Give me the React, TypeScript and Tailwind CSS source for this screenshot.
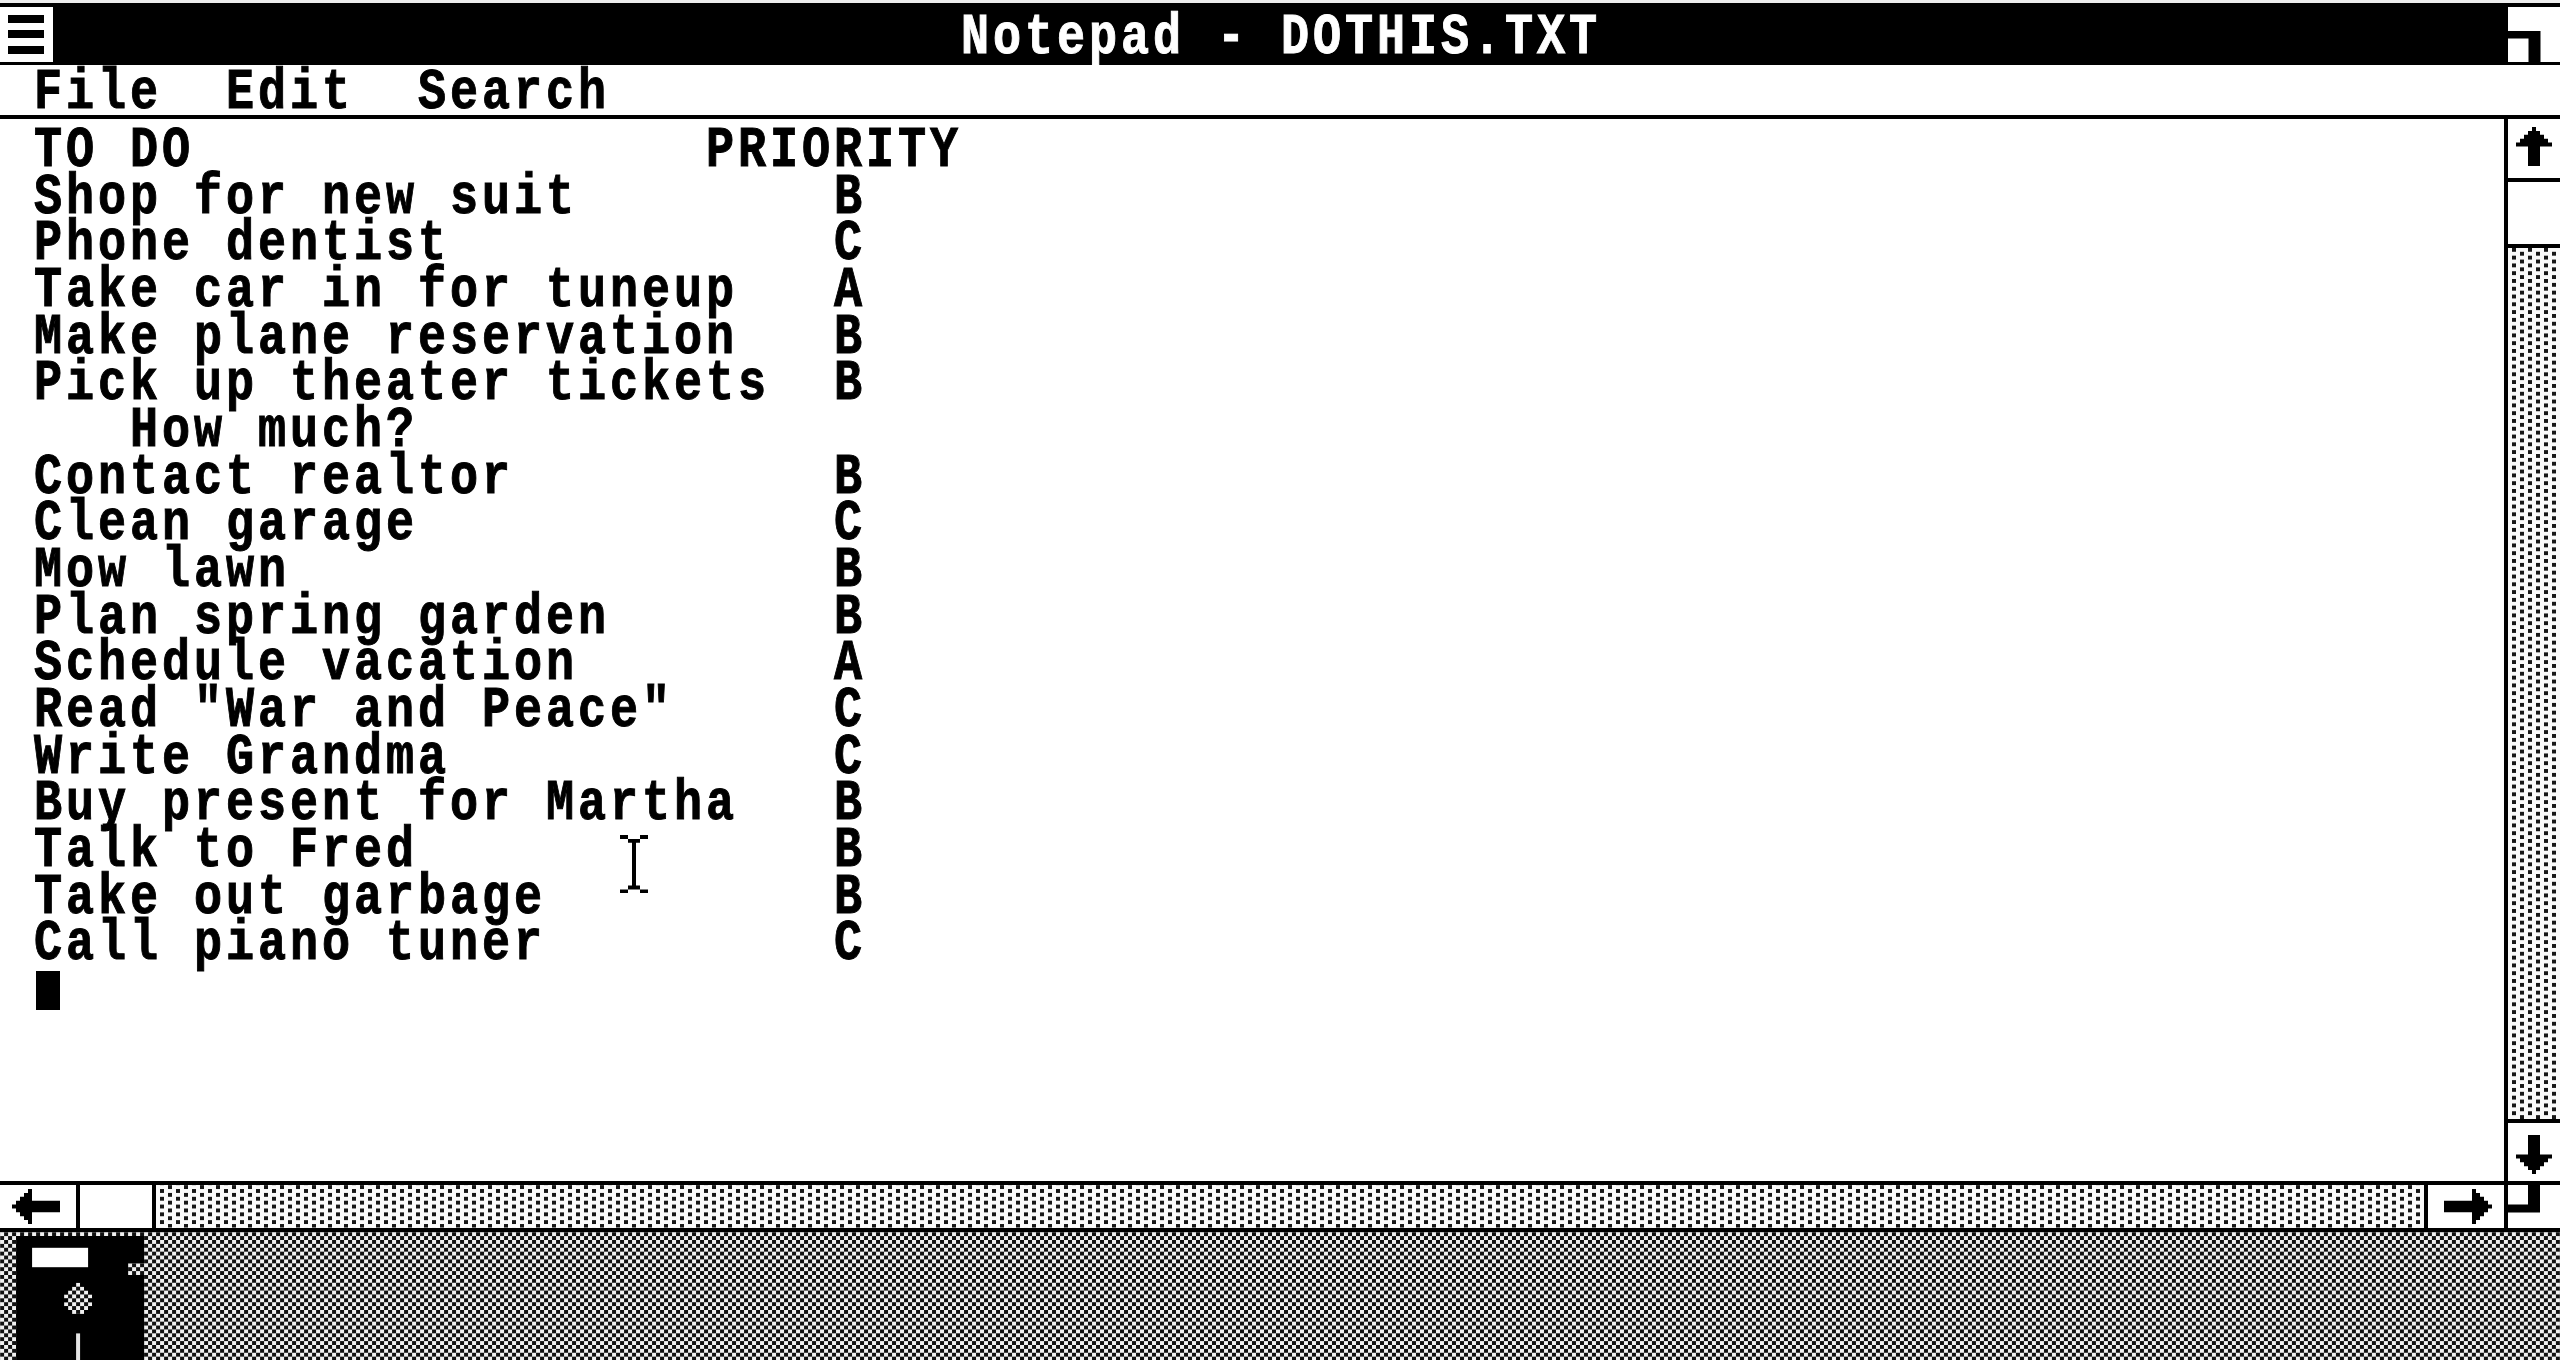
import React from "react";

const TODO: [string, string][] = [
  ["Shop for new suit", "B"],
  ["Phone dentist", "C"],
  ["Take car in for tuneup", "A"],
  ["Make plane reservation", "B"],
  ["Pick up theater tickets", "B"],
  ["   How much?", ""],
  ["Contact realtor", "B"],
  ["Clean garage", "C"],
  ["Mow lawn", "B"],
  ["Plan spring garden", "B"],
  ["Schedule vacation", "A"],
  ['Read "War and Peace"', "C"],
  ["Write Grandma", "C"],
  ["Buy present for Martha", "B"],
  ["Talk to Fred", "B"],
  ["Take out garbage", "B"],
  ["Call piano tuner", "C"],
];

// Fixed-pitch text: every character advances exactly 32px after the squeeze.
function Mono({ children }: { children: string }) {
  return (
    <span
      className="block origin-left scale-x-[0.81] whitespace-pre font-bold text-[57.8px] leading-[46.67px] tracking-[4.82px] [-webkit-text-stroke:1px_currentColor]"
      style={{ width: children.length * 32 }}
    >
      {children}
    </span>
  );
}

function Line({ text, mark, at }: { text: string; mark: string; at: number }) {
  return (
    <div className="flex h-[46.67px]">
      <div style={{ width: at * 32 }}>
        <Mono>{text}</Mono>
      </div>
      {mark && <Mono>{mark}</Mono>}
    </div>
  );
}

type Dir = "up" | "down" | "left" | "right";

// Stepped arrows: 9 x 10 cells when vertical, 12 x 9 when horizontal.
const ARROWS: Record<Dir, string> = {
  up: "M4 0h1v1h1v1h1v1h1v1h1v1h-3v5h-3v-5h-3v-1h1v-1h1v-1h1v-1h1z",
  down: "M3 0h3v5h3v1h-1v1h-1v1h-1v1h-1v1h-1v-1h-1v-1h-1v-1h-1v-1h-1v-1h3z",
  left: "M0 4h1v-1h1v-1h1v-1h1v-1h1v3h7v3h-7v3h-1v-1h-1v-1h-1v-1h-1v-1h-1z",
  right: "M12 4h-1v-1h-1v-1h-1v-1h-1v-1h-1v3h-7v3h7v3h1v-1h1v-1h1v-1h1v-1h1z",
};

function Arrow({ dir }: { dir: Dir }) {
  const vertical = dir === "up" || dir === "down";
  return (
    <svg
      width={vertical ? 36 : 48}
      height={vertical ? 39 : 35}
      viewBox={vertical ? "0 0 9 10" : "0 0 12 9"}
      preserveAspectRatio="none"
    >
      <path d={ARROWS[dir]} />
    </svg>
  );
}

// Sparse staggered dots, aligned to the screen's pixel grid.
function Dots({ id, x, y }: { id: string; x: number; y: number }) {
  return (
    <svg className="block h-full w-full bg-[#fafafa]">
      <defs>
        <pattern id={id} x={-x} y={-1 - y} width="16" height="7.778" patternUnits="userSpaceOnUse">
          <rect x="0" y="0" width="4" height="3.889" fill="#161616" />
          <rect x="8" y="3.889" width="4" height="3.889" fill="#161616" />
        </pattern>
      </defs>
      <rect width="100%" height="100%" fill={`url(#${id})`} />
    </svg>
  );
}

function Desktop() {
  return (
    <svg className="block h-[128.4px] w-[2560px]" viewBox="0 1231.6 2560 128.4">
      <defs>
        <pattern id="weave" x="0" y="-1" width="8" height="7.778" patternUnits="userSpaceOnUse">
          <rect width="8" height="7.778" fill="#111" />
          <rect x="4" y="0" width="4" height="3.889" fill="#f0f0f0" />
          <rect x="0" y="3.889" width="4" height="3.889" fill="#f0f0f0" />
        </pattern>
      </defs>
      <rect y="1231" width="2560" height="130" fill="url(#weave)" />
      <path d="M16 1235.7h128v27.2h-16v11.7h16v86h-128z" />
      <rect x="32" y="1247.4" width="56" height="19.4" fill="#fff" />
      <path
        d="M76 1282.4h4v3.9h4v3.9h4v3.9h4v3.9h-4v3.9h4v3.9h-4v3.9h-4v3.9h-12v-3.9h-4v-3.9h-4v-3.9h4v-3.9h-4v-3.9h4v-3.9h4v-3.9h4z"
        fill="url(#weave)"
      />
      <rect x="76" y="1333" width="4" height="28" fill="#e4e4e4" />
    </svg>
  );
}

export default function App() {
  return (
    <div className="flex h-[1360px] w-[2560px] flex-col overflow-hidden bg-white font-['Liberation_Mono',monospace] text-black">
      <header className="flex h-[65px] shrink-0 items-start border-t-[3px] border-[#eee] bg-black">
        <div className="mt-[3.5px] flex h-[55px] w-[52.5px] flex-col justify-between bg-white py-[8px] pr-[8.5px] pl-[8px]">
          <i className="h-[8px] bg-black" />
          <i className="h-[8px] bg-black" />
          <i className="h-[8px] bg-black" />
        </div>
        <h1 className="flex flex-1 justify-center pt-[12px] pl-[2px] text-white">
          <Mono>Notepad - DOTHIS.TXT</Mono>
        </h1>
        <svg className="mt-[3.5px] h-[55px] w-[52.5px] bg-white" viewBox="0 0 52.5 55">
          <path d="M0 24h32.5v31h-12v-23.5h-20.5z" />
        </svg>
      </header>

      <nav className="flex h-[54px] shrink-0 gap-[64px] border-b-[4px] border-black pt-[5px] pl-[33.5px]">
        <Mono>File</Mono>
        <Mono>Edit</Mono>
        <Mono>Search</Mono>
      </nav>

      <div className="flex h-[1062px] shrink-0">
        <main className="flex-1 pt-[9px] pl-[33.5px]">
          <Line text="TO DO" mark="PRIORITY" at={21} />
          {TODO.map(([text, mark]) => (
            <Line key={text} text={text} mark={mark} at={25} />
          ))}
          <div className="mt-[3px] ml-[2.5px] h-[39px] w-[24px] bg-black" />
        </main>
        <aside className="flex w-[56px] flex-col border-l-[4px] border-black">
          <div className="flex h-[63px] justify-center border-b-[4px] border-black pt-[8px]">
            <Arrow dir="up" />
          </div>
          <div className="h-[66px] border-b-[4px] border-black" />
          <div className="min-h-0 flex-1">
            <Dots id="dots-v" x={2508} y={248} />
          </div>
          <div className="flex h-[62px] justify-center border-t-[4px] border-black pt-[11.5px]">
            <Arrow dir="down" />
          </div>
        </aside>
      </div>

      <div className="flex h-[50.6px] shrink-0 border-y-[4px] border-black">
        <div className="w-[80px] border-r-[4px] border-black pt-[3.5px] pl-[12px]">
          <Arrow dir="left" />
        </div>
        <div className="w-[76px] border-r-[4px] border-black" />
        <div className="min-w-0 flex-1">
          <Dots id="dots-h" x={156} y={1185} />
        </div>
        <div className="w-[84px] border-x-[4px] border-black pt-[3.5px] pl-[16px]">
          <Arrow dir="right" />
        </div>
        <svg className="h-full w-[52px]" viewBox="0 0 52 42.6">
          <path d="M20 0h12v27.5h-32v-8h20z" />
        </svg>
      </div>

      <Desktop />

      <svg className="absolute top-[835px] left-[620px]" width="28" height="58.3" viewBox="0 0 7 15" preserveAspectRatio="none">
        <path d="M0 0h2v1h3v-1h2v1h-2v1h-1v11h1v1h2v1h-2v-1h-3v1h-2v-1h2v-1h1v-11h-1v-1h-2z" />
      </svg>
    </div>
  );
}
